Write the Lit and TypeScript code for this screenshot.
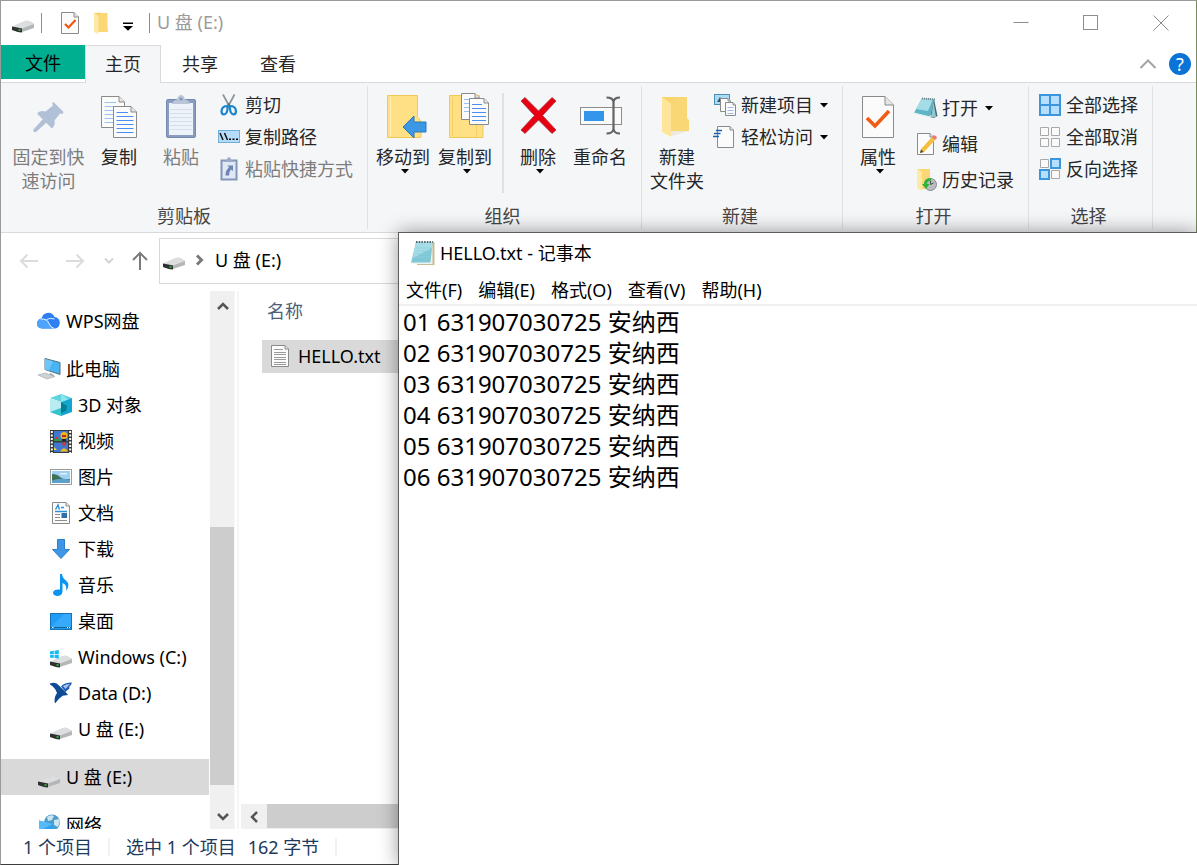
import { LitElement, html, svg, css, nothing, TemplateResult } from "lit";
import { customElement, property, state } from "lit/decorators.js";
import { classMap } from "lit/directives/class-map.js";

const draw = (w: number, h: number, body: unknown) =>
  html`<svg width=${w} height=${h} viewBox="0 0 ${w} ${h}" aria-hidden="true">${body}</svg>`;

/* ---------- shared shapes ---------- */

const driveShape = svg`
  <path d="M0 7 L13 1 Q15 .6 17 1 L22 4 V8 L10 12 Q8 12.6 6 12 L0 10Z" fill="#b4b6b8"/>
  <path d="M0 6.5 L13 1 Q15 .6 17 1 L22 4 L10 8.5Z" fill="#dcdee0"/>
  <path d="M0 6.5 L10 8.6 V12.6 L6 12 L0 10Z" fill="#2e3032"/>
  <path d="M6.5 9.2h2v1.6h-2z" fill="#33c640"/>`;

const pageShape = (w: number, h: number, f: number) => svg`
  <path d="M.5 .5 H${w - f} L${w - 0.5} ${f} V${h - 0.5} H.5Z" fill="#fbfbfb" stroke="#8a8a8a"/>
  <path d="M${w - f} .5 V${f} H${w - 0.5}" fill="#e6e6e6" stroke="#8a8a8a"/>`;

const caret = html`<svg class="caret" width="8" height="5" viewBox="0 0 8 5" aria-hidden="true"><path d="M0 0H8L4 4.6Z" fill="#000"/></svg>`;

/* ---------- icons ---------- */

const icons = {
  drive: draw(22, 14, driveShape),
  driveLow: draw(22, 22, svg`<g transform="translate(0 9)">${driveShape}</g>`),
  tick: draw(18, 22, svg`${pageShape(18, 22, 5)}<path d="M4 12l3.5 3.5L14.500 8" fill="none" stroke="#f0560f" stroke-width="2.200"/>`),
  folder: draw(16, 22, svg`<path d="M4 1H14.500V13L15 20H5z" fill="#fbd775"/><path d="M1 1L5.500 4V22L1 20Z" fill="#ffe9a6"/><path d="M1 .8H8L5.500 4Z" fill="#f7d06a"/>`),
  customize: draw(10, 9, svg`<path d="M0 .5H10V2H0z"/><path d="M0 4H10L5 8.800Z"/>`),
  pin: draw(44, 44, svg`<g fill="#b0c0d6"><path d="M26.500 7L36.500 17L35.500 19L33 18.500L27.500 25.500Q28.500 30 25 33.500L10 18.500Q13.500 15 18.500 16.500L26 10.500L25 8.500Z"/><path d="M16.500 23.500L20 27L9 37H6.500V34.500Z"/></g>`),
  copy: draw(44, 44, svg`
    <g transform="translate(4 1)">${pageShape(24, 32, 6)}<path d="M3.500 6.500H15M3.500 10.500H19M3.500 14.500H19M3.500 18.500H19M3.500 22.500H19M3.500 26.500H19" stroke="#9dc1f5"/></g>
    <g transform="translate(16 11)">${pageShape(24, 32, 6)}<path d="M3.500 6.500H15M3.500 10.500H20.500M3.500 14.500H20.500M3.500 18.500H20.500M3.500 22.500H20.500M3.500 26.500H20.500" stroke="#4b90f0"/></g>`),
  paste: draw(44, 44, svg`
    <rect x="7.500" y="4.500" width="29" height="38" rx="1.500" fill="#8a9dc0" stroke="#7689ad"/>
    <rect x="10" y="8" width="24" height="32" fill="#eef3fa"/>
    <path d="M11 14.500H33M11 18.500H33M11 22.500H33M11 26.500H33M11 30.500H33M11 34.500H33" stroke="#d4deec"/>
    <path d="M13 9Q14 5 18 4.500Q19 0 22 0Q25 0 26 4.500Q30 5 31 9Z" fill="#b9c6da"/><circle cx="22" cy="4" r="1.500" fill="#8093b3"/>`),
  cut: draw(22, 24, svg`
    <path d="M5 1.500L12 14.500M16.500 1.500L9.500 14.500" stroke="#8f969c" stroke-width="1.800"/>
    <circle cx="10.800" cy="11.500" r="1.200" fill="#5a6a78"/>
    <path d="M9.500 13Q4 13 3.500 18Q3.500 21.500 6 21.500Q9 21 9.500 16ZM12 13Q17.500 13 18 18Q18 21.500 15.500 21.500Q12.500 21 12 16Z" fill="none" stroke="#1b86cc" stroke-width="2.200"/>`),
  path: draw(22, 14, svg`<rect x=".5" y=".5" width="21" height="12" fill="#b5dcfb" stroke="#72add8"/><path d="M2 3L5 10M6.500 3L9.500 10" stroke="#111" stroke-width="1.500"/><path d="M11 8.500h2v1.500h-2zM14.500 8.500h2v1.500h-2zM18 8.500h2v1.500h-2z"/>`),
  shortcut: draw(22, 24, svg`
    <rect x="3.500" y="3.500" width="15" height="19" fill="#dfe8f4" stroke="#8296ba" stroke-width="2"/>
    <path d="M6 5Q7 2.500 9 2.500Q9.500 0 11 0Q12.500 0 13 2.500Q15 2.500 16 5Z" fill="#9aabc8"/>
    <path d="M9.500 8.500H15V14L13 12.500Q11 14.500 11 18.500H7.500Q7.500 13 11 10.500Z" fill="#6f86b2"/>`),
  moveTo: draw(44, 44, svg`
    <path d="M6.500 .5H36.500V22L40 26V42.500H6.500Z" fill="#ffe085" stroke="#f0ca55"/><path d="M9.500 2V41" stroke="#fff0ba"/>
    <path d="M22 32L33 21V27H45V37H33V43Z" fill="#3c97e4" stroke="#2a78bd"/>`),
  copyTo: draw(44, 44, svg`
    <path d="M6.500 .5H36.500V27H40V42.500H6.500Z" fill="#ffe085" stroke="#f0ca55"/><path d="M9.500 2V41M33.500 28V42" stroke="#f3cf66"/>
    <g transform="translate(18 -2)">${pageShape(19, 27, 5)}<path d="M3 6.500H12M3 10.500H16M3 14.500H16M3 18.500H16" stroke="#9dc1f5"/></g>
    <g transform="translate(26 3)">${pageShape(20, 27, 5)}<path d="M3 6.500H13M3 10.500H17M3 14.500H17M3 18.500H17M3 22.500H17" stroke="#4b90f0"/></g>`),
  del: draw(44, 44, svg`<path d="M5 6L9 2.500L22.500 16L36 2.500L40 6L26.500 20.500L40 35L36 38.500L22.500 25L9 38.500L5 35L18.500 20.500Z" fill="#e60012" stroke="#a5303a" stroke-width=".8"/>`),
  rename: draw(44, 44, svg`
    <rect x="2.500" y="12.500" width="41" height="17" fill="#fafafa" stroke="#8d8d8d"/><rect x="6" y="16" width="20" height="10" fill="#3496ea"/>
    <path d="M28.500 2.500Q35 2.500 35.500 7Q36 2.500 42 2.500M28.500 38.500Q35 38.500 35.500 34Q36 38.500 42 38.500M35.500 6V35" fill="none" stroke="#636363" stroke-width="2.200"/>`),
  newFolder: draw(44, 44, svg`<path d="M7 2H32V23L34 25V36H12Z" fill="#fad775"/><path d="M7 2L16 8V42L7 37Z" fill="#ffe59a"/><path d="M7 2H22L16 8Z" fill="#f9d36b"/><path d="M16 36H34L16 41Z" fill="#eee8d8"/>`),
  newItem: draw(22, 22, svg`
    <rect x=".5" y=".5" width="15" height="10" fill="#a9dcf3" stroke="#4b8fb5"/><path d="M3 8L6 3L9 8Z" fill="#31566b"/>
    <g transform="translate(6 4)">${pageShape(11, 14, 3)}</g>
    <g transform="translate(11 8)">${pageShape(11, 14, 3)}<path d="M2.500 5.500H8.500M2.500 8.500H8.500M2.500 11.500H8.500" stroke="#9db9e6"/></g>`),
  easy: draw(22, 22, svg`<g transform="translate(3 0)">${pageShape(17, 22, 4)}</g><path d="M2 4.500H8M0 7.500H6.500M-1 10.500H5" stroke="#1b62ab" stroke-width="1.600"/>`),
  props: draw(44, 44, svg`<g transform="translate(6 1)">${pageShape(32, 42, 9)}<path d="M5 22L13 30L27 15" fill="none" stroke="#f25a13" stroke-width="3.600"/></g>`),
  open: draw(24, 22, svg`<path d="M8 1L20 2L16 20L0 16Z" fill="#5fb4c6"/><path d="M8 1L19 2L14 14L2 12Z" fill="#a5dde6"/><path d="M20 2L23.500 19L20 21L16 20Z" fill="#4b6873"/><path d="M19.500 5L22 20L17 20.500Z" fill="#8fc9d4"/><path d="M8 1.500L21 2.500" stroke="#6b8b94" stroke-dasharray="1 1" stroke-width="2"/><path d="M0 16L16 20L17 18" fill="none" stroke="#e3f4f6"/>`),
  edit: draw(22, 22, svg`<g transform="translate(2 0)">${pageShape(17, 22, 4)}</g><path d="M6 16L17 4L20 7L9 19L5 20Z" fill="#f5bf3e"/><path d="M17 4L19 2Q22 3 22 5L20 7Z" fill="#ec7a72"/><path d="M5 20L6 16.500L8.500 19Z" fill="#424242"/>`),
  history: draw(22, 24, svg`<path d="M3 1H15V21H5Z" fill="#fbd775"/><path d="M2 1L7 4V23L2 20Z" fill="#ffe9a6"/><circle cx="15.500" cy="16.500" r="6" fill="#b9bdbf" stroke="#858a8c"/><path d="M15.500 12.500V16.500L18.500 15" fill="none" stroke="#4a4e50"/><path d="M16 10Q9 10 9 16H7L11 21L14.500 16H12Q12 13 16 12.500Z" fill="#2fb33a"/>`),
  selAll: draw(22, 22, svg`<rect width="22" height="22" fill="#3c96dd"/><path d="M2 2h8v8H2zM12 2h8v8h-8zM2 12h8v8H2zM12 12h8v8h-8z" fill="#b5deff"/>`),
  selNone: draw(22, 22, svg`<path d="M1.500 1.500h8v8h-8zM12.500 1.500h8v8h-8zM1.500 12.500h8v8h-8zM12.500 12.500h8v8h-8z" fill="#fafafa" stroke="#a8a8a8"/>`),
  selInv: draw(22, 22, svg`<path d="M1.500 1.500h8v8h-8zM12.500 12.500h8v8h-8z" fill="#fafafa" stroke="#a8a8a8"/><path d="M12 1h9v9h-9zM1 12h9v9H1z" fill="#b5deff" stroke="#3c96dd" stroke-width="2"/>`),
  wps: draw(22, 18, svg`<g transform="translate(-1 0)"><path d="M5 16.500Q0 16 0 11.500Q.5 7 4.500 6.500Q6 1 11.500 .8Q16 1 17.500 5Q22.500 5.500 22.800 10.500Q22.500 16 18 16.500Z" fill="#2e7ff2"/><path d="M4.500 6.500Q11 6 12.500 11Q14 15.500 18 16.500H5Q0 16 0 11.500Q.5 7 4.500 6.500Z" fill="#4ea3fb"/><path d="M3.500 7Q10 6.500 12 11.500Q13.500 15.500 17 16.500M9.500 7.500Q13 5.500 17.500 7" fill="none" stroke="#e6f2ff"/></g>`),
  pc: draw(22, 22, svg`<path d="M7 .5L22 4.500V16.500L7 11.500Z" fill="#49b4f4" stroke="#54707f"/><path d="M7 1L15 3.200L11 12.500L7 11.500Z" fill="#6cc6fa"/><path d="M12 15L16 17V18L11 17Z" fill="#9aa4aa"/><path d="M0 17L7 15L17 18.500L9 21Z" fill="#cdd2d6" stroke="#9fa8ae" stroke-width=".6"/>`),
  cube: draw(22, 22, svg`<path d="M0 4L11 0L22 4L11 8Z" fill="#5fd3df"/><path d="M0 4L11 8V22L0 18Z" fill="#b9ecf0"/><path d="M22 4L11 8V22L22 18Z" fill="#14a5cf"/><path d="M11 8L17 12L16 17L11 19Z" fill="#077f92"/><path d="M0 18L11 14V22Z" fill="#35c1ce"/><path d="M11 0L11 8L18 5.500Z" fill="#8ee6ec"/>`),
  video: draw(22, 23, svg`<rect width="22" height="23" fill="#3a3a3a"/><path d="M1.800 1V23M20.200 1V23" stroke="#fff" stroke-width="2" stroke-dasharray="2 1.500"/><path d="M4 1h14v10H4zM4 12.500h14V22H4z" fill="#3f78cf"/><path d="M4 9Q7 5 11 11H4Z" fill="#2f9a44"/><path d="M5 7h3v2H5z" fill="#e2302b"/><circle cx="14" cy="5.500" r="3.500" fill="#f2b61d"/><path d="M12 5h4v2h-4z" fill="#b3271d"/><path d="M12 9h4v2h-4z" fill="#222"/><circle cx="14" cy="14" r="1.800" fill="#e2302b"/><path d="M10 21.500Q14 15 18 21.500Z" fill="#f2b61d"/><path d="M4 17l3 3H4z" fill="#f5d548"/>`),
  picture: draw(22, 16, svg`<rect x=".5" y=".5" width="21" height="15" fill="#fff" stroke="#9b9b9b"/><path d="M2 2h18v12H2z" fill="#9fd0f4"/><path d="M2 5Q7 5 10 8T20 10V14H2Z" fill="#3f7158"/><path d="M2 11.500Q10 8.500 20 11V14H2Z" fill="#5aa0c8"/><path d="M10 4h7v1.500h-7z" fill="#dff0fc"/>`),
  doc: draw(18, 22, svg`${pageShape(18, 22, 4)}<path d="M3.500 7.500L6 3L7.500 7.500" fill="none" stroke="#2d8fd5" stroke-width="1.400"/><path d="M9 5.500H12M3 9.500H15" stroke="#2d8fd5" stroke-width="1.500"/><path d="M3 12.500H8M3 15.500H8M3 18.500H15" stroke="#8e8e8e"/><path d="M9.500 11h5.500v5H9.500z" fill="#2f6fa8"/>`),
  down: draw(18, 20, svg`<path d="M5.500 .5H12.500V10.500H17.500L9 19.500L.5 10.500H5.500Z" fill="#3e97e6" stroke="#2d7fca"/>`),
  music: draw(18, 24, svg`<path d="M8 1H10Q10.500 5 14 7.500Q19 12 14 18Q15.500 12 10.500 10V18.500Q10 23 5 23Q1 22.500 1 19.500Q1.500 16 8 16.500Z" fill="#0a95f0"/>`),
  desktop: draw(22, 17, svg`<rect x=".5" y=".5" width="21" height="16" fill="#1e9df6" stroke="#1573b8"/><path d="M1 14L14 1H21V14Z" fill="#36a9fa"/><path d="M1 14.500H21" stroke="#14628f"/><path d="M2 14h1.500v1H2zM17 14h1v1h-1zM19 14h1v1h-1z" fill="#fff"/>`),
  winDrive: draw(22, 22, svg`<g transform="translate(0 9)">${driveShape}</g><g transform="translate(0 4)"><path d="M0 1.400L3.800 .8V4H0zM4.600 .7L8.800 0V4H4.600zM0 4.800H3.800V8L0 7.500zM4.600 4.800H8.800V8.600L4.600 8.100z" fill="#13b9f2"/></g>`),
  data: draw(22, 24, svg`<path d="M0 2.500Q6 .5 9 4.500L15.500 11L18 14L7 15.500V12Q5 6 0 3.500Z" fill="#0f4a97"/><path d="M11 5.500Q14 1.500 22 1.500Q21.500 4 19 6Q20.500 7.500 17.500 9L15.500 11Z" fill="#1b5cb5"/><path d="M13 5Q16 3 20 3L15.500 8Z" fill="#a9c4ea"/><path d="M7 12L13 14.500Q9 17 5 22.500Q3.500 17 7 12Z" fill="#0f4a97"/>`),
  network: draw(22, 22, svg`<circle cx="14" cy="8.500" r="8" fill="#4d9cc8"/><path d="M9 3Q13 0 16 2L14 6L10 7ZM16 6L21.500 5Q22 9 20 13L16 11Z" fill="#cbe6f2"/><path d="M1 6.500L15 10V22L1 18Z" fill="#2ba1f2"/><path d="M1 6.500L15 10L1 17Z" fill="#56bafb"/>`),
  text: draw(18, 22, svg`${pageShape(18, 22, 4)}<path d="M3 4.500H12M3 7.500H15M3 9.500H15M3 12.500H15M3 14.500H15M3 17.500H15M3 19.500H15" stroke="#9b9b9b"/>`),
  notepad: draw(24, 26, svg`
    <path d="M6 2H23.500V25H6Z" fill="#c9bb93"/><path d="M20 24H3L2 22L21 22Z" fill="#fff"/>
    <path d="M5 2H21.500L19.500 23H0Z" fill="#7fc6d6"/><path d="M5 2H21.500L21 8L2 18Z" fill="#a5dde8"/>
    <path d="M0 22.500H19.500L21.500 4V24H2Z" fill="#e9f3f2"/><path d="M5 8H20M4.500 11H20M4 14H19.500M3 17H19.500" stroke="#8fd0de" stroke-width=".8"/>
    <path d="M5 2H22" stroke="#53666b" stroke-width="2" stroke-dasharray="1.500 1.200"/>`),
  chevronUp: draw(18, 12, svg`<path d="M1.500 10L9 2.500L16.500 10" fill="none" stroke="#a3a3a3" stroke-width="2"/>`),
  minimize: draw(16, 16, svg`<path d="M.5 7.500H15.500" stroke="#8d8d8d"/>`),
  maximize: draw(16, 16, svg`<rect x=".5" y=".5" width="14" height="14" fill="none" stroke="#8d8d8d"/>`),
  close: draw(16, 16, svg`<path d="M.5 .5L15.500 15.500M15.500 .5L.5 15.500" stroke="#8d8d8d"/>`),
  back: draw(20, 16, svg`<path d="M19 8H2M8.500 1.500L2 8L8.500 14.500" fill="none" stroke="#dcdcdc" stroke-width="2"/>`),
  forward: draw(20, 16, svg`<path d="M1 8H18M11.500 1.500L18 8L11.500 14.500" fill="none" stroke="#dcdcdc" stroke-width="2"/>`),
  recent: draw(10, 8, svg`<path d="M1 1.500L5 5.500L9 1.500" fill="none" stroke="#d3d3d3" stroke-width="2"/>`),
  up: draw(16, 20, svg`<path d="M8 19V2M1 9L8 2L15 9" fill="none" stroke="#7b7b7b" stroke-width="2"/>`),
  crumb: draw(8, 12, svg`<path d="M1 1.500L5.500 6L1 10.500" fill="none" stroke="#7a7a7a" stroke-width="3"/>`),
  scrollUp: draw(12, 8, svg`<path d="M1 7L6 2L11 7" fill="none" stroke="#555" stroke-width="2.500"/>`),
  scrollDown: draw(12, 8, svg`<path d="M1 1L6 6L11 1" fill="none" stroke="#555" stroke-width="2.500"/>`),
  scrollLeft: draw(9, 12, svg`<path d="M8 1L3 6L8 11" fill="none" stroke="#555" stroke-width="2.500"/>`),
};

const base = css`
  :host, button, textarea { font-family: "Noto Sans", "Noto Sans CJK SC", sans-serif; font-size: 18px; line-height: 24px; }
  * { box-sizing: border-box; }
  button { margin: 0; padding: 0; border: 0; background: none; color: inherit; white-space: nowrap; }
  svg { display: block; flex: none; overflow: visible; }
`;

/* ---------- ribbon ---------- */

@customElement("ribbon-bar")
class RibbonBar extends LitElement {
  static styles = [base, css`
    :host { display: flex; height: 150px; padding: 3px 0; background: #f5f6f8; border-bottom: 1px solid #d9dadd; color: #262626; cursor: default; }
    .group { display: flex; flex-direction: column; border-right: 1px solid #e0e1e4; }
    .tools { display: flex; flex: 1; padding-left: 4px; }
    .first .tools { padding-left: 8px; }
    .organize .tools { padding-right: 10px; }
    .caption { padding: 0 4px 1px 0; text-align: center; color: #444; }
    .first .caption { padding-right: 0; }
    .big { display: flex; flex-direction: column; align-items: center; width: 62px; padding-top: 9px; }
    .big.wide { width: 79px; }
    .big .label { margin-top: 6px; white-space: pre; }
    .big svg { height: 44px; }
    .big .caret { height: 5px; margin: 0 0 0 4px; }
    .split { width: 2px; margin: 7px 3px -18px 6px; height: 100px; background: #dfe0e3; }
    .column { display: flex; flex-direction: column; padding: 7px 14px 0 6px; gap: 8px; }
    .column.roomy { padding-top: 10px; gap: 12px; }
    .small { display: flex; align-items: center; gap: 5px; height: 24px; }
    .small .caret { margin-left: 2px; }
    .glyph { display: flex; justify-content: center; width: 22px; }
    .off { color: #7d7d7d; }
  `];

  private big(icon: TemplateResult, label: string, o: { menu?: boolean; off?: boolean; wide?: boolean } = {}) {
    return html`<button class=${classMap({ big: true, off: !!o.off, wide: !!o.wide })} ?disabled=${o.off}>
      ${icon}<span class="label">${label}</span>${o.menu ? caret : nothing}</button>`;
  }

  private small(icon: TemplateResult, label: string, o: { menu?: boolean; off?: boolean } = {}) {
    return html`<button class=${classMap({ small: true, off: !!o.off })} ?disabled=${o.off}>
      <span class="glyph">${icon}</span><span>${label}</span>${o.menu ? caret : nothing}</button>`;
  }

  render() {
    return html`
      <section class="group first">
        <div class="tools">
          ${this.big(icons.pin, "固定到快\n速访问", { off: true, wide: true })}
          ${this.big(icons.copy, "复制")}
          ${this.big(icons.paste, "粘贴", { off: true })}
          <div class="column">
            ${this.small(icons.cut, "剪切")}
            ${this.small(icons.path, "复制路径")}
            ${this.small(icons.shortcut, "粘贴快捷方式", { off: true })}
          </div>
        </div>
        <div class="caption">剪贴板</div>
      </section>
      <section class="group organize">
        <div class="tools">
          ${this.big(icons.moveTo, "移动到", { menu: true })}
          ${this.big(icons.copyTo, "复制到", { menu: true })}
          <div class="split"></div>
          ${this.big(icons.del, "删除", { menu: true })}
          ${this.big(icons.rename, "重命名")}
        </div>
        <div class="caption">组织</div>
      </section>
      <section class="group">
        <div class="tools">
          ${this.big(icons.newFolder, "新建\n文件夹")}
          <div class="column">
            ${this.small(icons.newItem, "新建项目", { menu: true })}
            ${this.small(icons.easy, "轻松访问", { menu: true })}
          </div>
        </div>
        <div class="caption">新建</div>
      </section>
      <section class="group">
        <div class="tools">
          ${this.big(icons.props, "属性", { menu: true })}
          <div class="column roomy">
            ${this.small(icons.open, "打开", { menu: true })}
            ${this.small(icons.edit, "编辑")}
            ${this.small(icons.history, "历史记录")}
          </div>
        </div>
        <div class="caption">打开</div>
      </section>
      <section class="group">
        <div class="tools">
          <div class="column">
            ${this.small(icons.selAll, "全部选择")}
            ${this.small(icons.selNone, "全部取消")}
            ${this.small(icons.selInv, "反向选择")}
          </div>
        </div>
        <div class="caption">选择</div>
      </section>`;
  }
}

/* ---------- notepad window ---------- */

@customElement("notepad-window")
class NotepadWindow extends LitElement {
  static styles = [base, css`
    :host { display: flex; flex-direction: column; background: #fff; border: 1px solid #5c5c5c; border-width: 1px 0 0 1px; box-shadow: 0 0 18px rgba(0, 0, 0, .4); color: #000; }
    .title { display: flex; align-items: center; gap: 5px; height: 42px; padding: 0 12px 2px; }
    .menu { display: flex; gap: 16px; height: 31px; padding-left: 7px; align-items: center; border-bottom: 2px solid #f0f0f0; }
    .text { flex: 1; width: 100%; margin: 0; padding: 0 4px; border: 0; outline: 0; resize: none; background: #fff; color: #000; font-size: 24px; line-height: 31px; }
  `];

  @property() content = "";

  render() {
    return html`
      <div class="title">${icons.notepad}<span>HELLO.txt - 记事本</span></div>
      <nav class="menu">
        ${["文件(F)", "编辑(E)", "格式(O)", "查看(V)", "帮助(H)"].map((m) => html`<button>${m}</button>`)}
      </nav>
      <textarea class="text" aria-label="HELLO.txt" spellcheck="false" .value=${this.content}></textarea>`;
  }
}

/* ---------- explorer window ---------- */

interface Place { icon: TemplateResult; label: string; children?: Place[]; selected?: boolean }

const places: Place[] = [
  { icon: icons.wps, label: "WPS网盘" },
  {
    icon: icons.pc, label: "此电脑", children: [
      { icon: icons.cube, label: "3D 对象" },
      { icon: icons.video, label: "视频" },
      { icon: icons.picture, label: "图片" },
      { icon: icons.doc, label: "文档" },
      { icon: icons.down, label: "下载" },
      { icon: icons.music, label: "音乐" },
      { icon: icons.desktop, label: "桌面" },
      { icon: icons.winDrive, label: "Windows (C:)" },
      { icon: icons.data, label: "Data (D:)" },
      { icon: icons.driveLow, label: "U 盘 (E:)" },
    ],
  },
  { icon: icons.driveLow, label: "U 盘 (E:)", selected: true },
  { icon: icons.network, label: "网络" },
];

@customElement("app-root")
class AppRoot extends LitElement {
  static styles = [base, css`
    :host { display: block; position: relative; height: 100vh; overflow: hidden; background: #fff; color: #000; cursor: default; }
    .explorer { display: flex; flex-direction: column; height: 100%; border: 1px solid #9a9a9a; border-right-color: #7b8a58; border-bottom-color: #3d3d3d; }
    .title { display: flex; align-items: center; height: 44px; padding: 0 0 0 11px; color: #9b9b9b; }
    .quick { display: flex; align-items: center; }
    .quick .bar { width: 1px; height: 20px; background: #8c8c8c; }
    .quick .a { margin: 8px 7px 0 0; }
    .quick .b { margin-left: 19px; }
    .quick .c { margin-left: 14px; }
    .quick .d { margin: 6px 16px 0 14px; }
    .name { flex: 1; margin-left: 7px; padding-bottom: 2px; }
    .control { display: flex; align-items: center; justify-content: center; width: 70px; height: 44px; }
    .tabs { display: flex; align-items: flex-start; height: 38px; border-bottom: 1px solid #d9dadd; }
    .tab { height: 38px; padding: 0 20px 2px; color: #262626; border: 1px solid transparent; border-bottom: 0; }
    .tab.primary { height: 34px; padding: 0 23px; background: #00af90; color: #000; border-color: #00af90; }
    .tab.current { background: #f5f6f8; border-color: #d9dadd; padding: 0 19px 2px; }
    .tail { display: flex; align-items: center; align-self: center; gap: 12px; margin-left: auto; padding-right: 5px; }
    .help { width: 22px; height: 22px; border-radius: 11px; background: #0a74d6; color: #fff; line-height: 22px; text-align: center; }
    .travel { display: flex; align-items: center; height: 58px; padding: 0 0 2px 18px; }
    .travel .fwd { margin-left: 26px; }
    .travel .rec { margin-left: 19px; }
    .travel .up { margin: 0 11px 0 18px; }
    .address { display: flex; flex: 1; align-items: center; height: 46px; padding: 0 0 2px 3px; border: 1px solid #d9d9d9; }
    .address .disk { margin-top: 8px; }
    .address .crumb { margin: 0 11px; }
    .body { display: flex; flex: 1; min-height: 0; }
    .places { width: 209px; overflow: hidden; padding: 12px 1px 0 0; display: flex; flex-direction: column; gap: 12px; }
    .branch { flex: none; }
    .place { display: flex; align-items: center; gap: 5px; width: 100%; height: 36px; padding-left: 37px; text-align: left; }
    .place.child { padding-left: 49px; }
    .place.selected { background: #d9d9d9; }
    .place .slot { display: flex; justify-content: center; width: 22px; margin-right: 1px; }
    .vscroll { display: flex; flex-direction: column; width: 25px; background: #f0f0f0; border-right: 1px solid #f6f6f6; }
    .arrow { display: flex; align-items: center; justify-content: center; flex: none; width: 25px; height: 25px; }
    .arrow.first { height: 29px; }
    .above { flex: 207; }
    .thumb { flex: 258; background: #cdcdcd; }
    .below { flex: 19; }
    .files { display: flex; flex: 1; flex-direction: column; margin-left: 2px; border-left: 2px solid #f5f5f5; }
    .heading { padding: 8px 0 1px 28px; color: #4c607a; }
    .file { display: flex; align-items: center; gap: 9px; height: 33px; margin: 16px 0 auto 23px; padding-left: 9px; padding-bottom: 2px; background: #d9d9d9; }
    .hscroll { display: flex; height: 25px; margin-left: 2px; background: #f0f0f0; }
    .hthumb { flex: 1; margin: 0 0 1px 1px; background: #cdcdcd; }
    .status { display: flex; align-items: center; height: 35px; padding-left: 22px; color: #1e395b; }
    .status .sep { width: 2px; height: 18px; margin: 0 16px; background: #f2f2f2; }
    .status .size { margin-left: 12px; }
    .note { position: absolute; left: 398px; top: 232px; right: 0; bottom: 0; }
  `];

  @state() private note = Array.from({ length: 6 }, (_, i) => `0${i + 1} 631907030725 安纳西`).join("\n");

  private place(p: Place, child = false): TemplateResult {
    return html`<button class=${classMap({ place: true, child, selected: !!p.selected })}>
      <span class="slot">${p.icon}</span><span>${p.label}</span></button>`;
  }

  render() {
    return html`
      <main class="explorer">
        <header class="title">
          <div class="quick">
            <span class="a">${icons.drive}</span><span class="bar"></span>
            <button class="b" aria-label="属性">${icons.tick}</button>
            <button class="c" aria-label="新建文件夹">${icons.folder}</button>
            <button class="d" aria-label="自定义快速访问工具栏">${icons.customize}</button>
            <span class="bar"></span>
          </div>
          <span class="name">U 盘 (E:)</span>
          <button class="control" aria-label="最小化">${icons.minimize}</button>
          <button class="control" aria-label="最大化">${icons.maximize}</button>
          <button class="control" aria-label="关闭">${icons.close}</button>
        </header>
        <nav class="tabs">
          <button class="tab primary">文件</button>
          <button class="tab current">主页</button>
          <button class="tab">共享</button>
          <button class="tab">查看</button>
          <div class="tail">
            <button aria-label="折叠功能区">${icons.chevronUp}</button>
            <button class="help">?</button>
          </div>
        </nav>
        <ribbon-bar></ribbon-bar>
        <div class="travel">
          <button aria-label="后退">${icons.back}</button>
          <button class="fwd" aria-label="前进">${icons.forward}</button>
          <button class="rec" aria-label="最近浏览的位置">${icons.recent}</button>
          <button class="up" aria-label="上移">${icons.up}</button>
          <div class="address">
            <span class="disk">${icons.drive}</span><span class="crumb">${icons.crumb}</span><button>U 盘 (E:)</button>
          </div>
        </div>
        <div class="body">
          <nav class="places">
            ${places.map((p) => html`<div class="branch">${this.place(p)}${p.children?.map((c) => this.place(c, true))}</div>`)}
          </nav>
          <div class="vscroll">
            <button class="arrow first" aria-label="向上滚动">${icons.scrollUp}</button>
            <div class="above"></div><div class="thumb"></div><div class="below"></div>
            <button class="arrow" aria-label="向下滚动">${icons.scrollDown}</button>
          </div>
          <section class="files">
            <div class="heading">名称</div>
            <div class="file">${icons.text}<span>HELLO.txt</span></div>
            <div class="hscroll"><button class="arrow" aria-label="向左滚动">${icons.scrollLeft}</button><div class="hthumb"></div></div>
          </section>
        </div>
        <footer class="status">
          <span>1 个项目</span><span class="sep"></span><span>选中 1 个项目</span><span class="size">162 字节</span><span class="sep"></span>
        </footer>
      </main>
      <notepad-window class="note" .content=${this.note}></notepad-window>`;
  }
}
